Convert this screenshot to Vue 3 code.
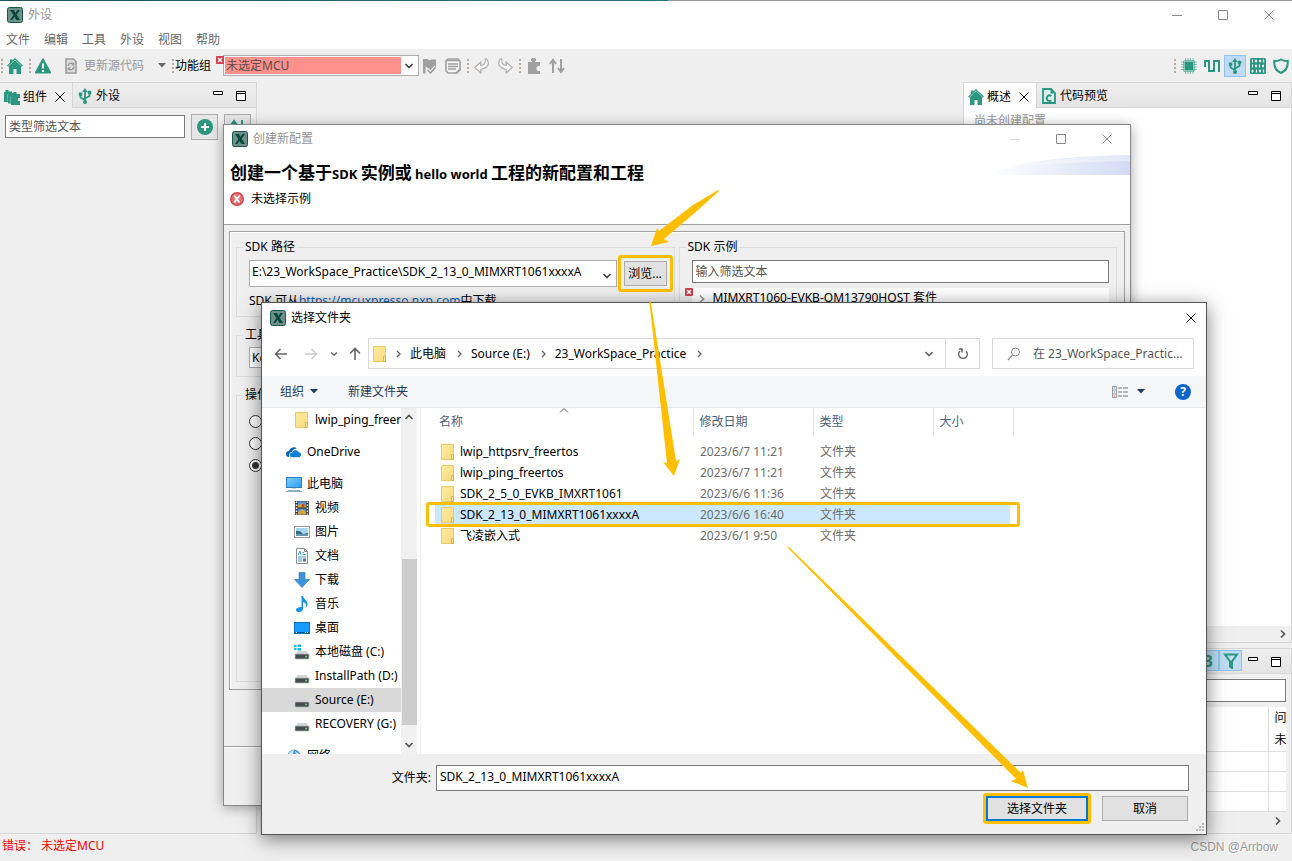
<script setup>
import { ref } from 'vue'

const menus = ['文件', '编辑', '工具', '外设', '视图', '帮助']
const places = [
  { icon: 'folder', label: 'lwip_ping_freertos', deep: true },
  { icon: 'cloud', label: 'OneDrive', gap: true },
  { icon: 'pc', label: '此电脑', gap: true },
  { icon: 'video', label: '视频', deep: true },
  { icon: 'image', label: '图片', deep: true },
  { icon: 'doc', label: '文档', deep: true },
  { icon: 'down', label: '下载', deep: true },
  { icon: 'music', label: '音乐', deep: true },
  { icon: 'desktop', label: '桌面', deep: true },
  { icon: 'cdrive', label: '本地磁盘 (C:)', deep: true },
  { icon: 'drive', label: 'InstallPath (D:)', deep: true },
  { icon: 'drive', label: 'Source (E:)', deep: true, current: true },
  { icon: 'drive', label: 'RECOVERY (G:)', deep: true },
  { icon: 'globe', label: '网络', gap: true }
]
const files = [
  { name: 'lwip_httpsrv_freertos', date: '2023/6/7 11:21' },
  { name: 'lwip_ping_freertos', date: '2023/6/7 11:21' },
  { name: 'SDK_2_5_0_EVKB_IMXRT1061', date: '2023/6/6 11:36' },
  { name: 'SDK_2_13_0_MIMXRT1061xxxxA', date: '2023/6/6 16:40' },
  { name: '飞凌嵌入式', date: '2023/6/1 9:50' }
]
const selected = ref('SDK_2_13_0_MIMXRT1061xxxxA')
const crumbs = ['此电脑', 'Source (E:)', '23_WorkSpace_Practice']
const action = ref(3)
</script>

<template>
  <div class="app">
    <svg class="sprite" aria-hidden="true">
      <defs>
        <linearGradient id="fold" x1="0" y1="0" x2="1" y2="1"><stop offset="0" stop-color="#ffeaa3" /><stop offset="1" stop-color="#fbdb7c" /></linearGradient>
        <linearGradient id="screen" x1="0" y1="0" x2="1" y2="1"><stop offset="0" stop-color="#7fd0fb" /><stop offset="1" stop-color="#2a9df0" /></linearGradient>
      </defs>
      <symbol id="logo" viewBox="0 0 16 16"><rect x=".5" y=".5" width="15" height="15" rx="2" fill="#6f8f89" stroke="#15594e" /><path d="M3 3h4l1.300 3L10.500 3H13L9.700 7.800 13 13H9.200L7.700 9.800 5.300 13H3l3.500-5z" fill="#06483c" /></symbol>
      <symbol id="home" viewBox="0 0 16 16"><path d="M8 0 16 7.500 14.500 9 14 8.500V16H9.500v-5h-3v5H2V8.500L1.500 9 0 7.500 3 5V1.500h2.500v1z" fill="#2b9780" /><path d="m1 8.500 7-6.500 7 6.500" stroke="#a8d8cd" stroke-width=".8" fill="none" /></symbol>
      <symbol id="warn" viewBox="0 0 16 16"><path d="M8 1.500 15 14.500H1z" fill="#2b9780" stroke="#2b9780" stroke-width="2" stroke-linejoin="round" /><path d="M8 5.500v5M8 12v2" stroke="#fff" stroke-width="2" /></symbol>
      <symbol id="update" viewBox="0 0 12 16"><path d="M1 1h7.500L11 3.500V15H1z" fill="#ddd" stroke="#9d9d9d" stroke-width="1.600" /><path d="M3.200 8a3 3 0 0 1 5-2M8.800 8.500a3 3 0 0 1-5 2.500" fill="none" stroke="#999" stroke-width="1.400" /><path d="M9.300 4v3.400H6.200zM2.700 13V9.600h3.100z" fill="#999" /></symbol>
      <symbol id="flag" viewBox="0 0 14 16"><path d="M0 1h4.500q2 1.500 4 .5H13v7.500l-3 3.500-1.500 1.500L5 11.500 4 9H2.500v6.500H0z" fill="#a0a0a0" /><path d="m4.500 10 3 3 4.500-5" stroke="#efefef" stroke-width="1.200" fill="none" /><path d="m4.500 12 3 3 5-5.500" stroke="#a0a0a0" stroke-width="1.600" fill="none" /></symbol>
      <symbol id="note" viewBox="0 0 16 16"><path d="M3 1h10l2 2v9l-3 3H3l-2-2V3z" fill="#f4f4f4" stroke="#a0a0a0" stroke-width="1.600" /><path d="M1 2.500h14M3 6h10M3 8.500h10M3 11h8" stroke="#a0a0a0" stroke-width="1.300" /><path d="m10 15 5-5 1 1-4.500 5z" fill="#a0a0a0" /></symbol>
      <symbol id="undo" viewBox="0 0 16 16"><path d="m.800 9.500 6-5.500v3.500q5-.5 4.500-6.500h1.500q5 7.500-6 10.500v3.500z" fill="#f8f8f8" stroke="#aaa" stroke-width="1.100" /></symbol>
      <symbol id="puzzle" viewBox="0 0 14 16"><path d="M1 4h4V3H4V1l1-1h3l1 1v2H8v1h5v4h-2L9.500 9v2.500L11 13h2v3H1z" fill="#a0a0a0" /></symbol>
      <symbol id="sort" viewBox="0 0 16 16"><path d="M4 15V3M1 6l3-4 3 4M12 1v12M9 10l3 4 3-4" stroke="currentColor" stroke-width="2" fill="none" /></symbol>
      <symbol id="chip" viewBox="0 0 16 16"><path d="M4.500 0v16M7 0v16M9.500 0v16M12 0v16M0 4h16M0 6.500h16M0 9h16M0 11.500h16" stroke="#82c3b5" /><rect x="2.500" y="2.500" width="11" height="11" fill="#2b9780" /><rect x="3.500" y="3.500" width="9" height="9" fill="none" stroke="#aad7cd" stroke-width=".7" /></symbol>
      <symbol id="wave" viewBox="0 0 16 16"><path d="M1 9V3h4v10h5V3h5v11" stroke="#2b9780" stroke-width="2" fill="none" /></symbol>
      <symbol id="usb" viewBox="0 0 16 16"><path d="M8 2v13M8 12 3.500 9.500V6M8 10.500l4.500-2.500V5" stroke="#2b9780" stroke-width="1.800" fill="none" /><path d="M8 0 10.800 4H5.200zM1.800 4.500h3.500v3.200H1.800z" fill="#2b9780" /><circle cx="12.500" cy="4.500" r="1.900" fill="#2b9780" /><circle cx="8" cy="14" r="2" fill="#2b9780" /></symbol>
      <symbol id="bits" viewBox="0 0 16 16"><rect width="16" height="16" rx="1.500" fill="#2b9780" /><path d="M2.500 1.500v3M13.500 1.500v3M2.500 6.500v3M9.500 6.500v3M6.500 11.500v3M13.500 11.500v3" stroke="#fff" stroke-width="1.200" /><path d="M5.500 2h1v2h-1zM9.500 2h1v2h-1zM5.500 7h1v2h-1zM12.500 7h1v2h-1zM2 12h1v2H2zM9.500 12h1v2h-1z" fill="none" stroke="#fff" stroke-width=".9" /></symbol>
      <symbol id="shield" viewBox="0 0 16 16"><path d="M8 1.500Q11 3.500 14.800 3q.5 9-6.800 12Q.7 12 1.200 3 5 3.500 8 1.500z" fill="none" stroke="#2b9780" stroke-width="2" /></symbol>
      <symbol id="parts" viewBox="0 0 16 16"><path d="M0 3h1.500V1h3v1.500H8V4h1.500V3h3v2H16v4h-2v3h2v4H7v-1.500H4V13H0z" fill="#2b9780" /><path d="M3.500 12V5M6.500 14V7.500" stroke="#6dbba9" stroke-width=".7" fill="none" /></symbol>
      <symbol id="close" viewBox="0 0 10 10"><path d="m.5.500 9 9M9.500.500l-9 9" stroke="currentColor" stroke-width="1" fill="none" /></symbol>
      <symbol id="code" viewBox="0 0 14 16"><path d="M1 1h8l4 4v10H1z" fill="#dcefeb" stroke="#2b9780" stroke-width="1.800" /><path d="M8.500 1v4.500H13z" fill="#2b9780" /><path d="M9.300 8.200a2.700 2.700 0 1 0 0 4" stroke="#2b9780" stroke-width="1.900" fill="none" /></symbol>
      <symbol id="plus" viewBox="0 0 16 16"><circle cx="8" cy="8" r="8" fill="#2b9780" /><path d="M8 4v8M4 8h8" stroke="#fff" stroke-width="2" /></symbol>
      <symbol id="min" viewBox="0 0 10 10"><path d="M.5.500h9v3h-9z" fill="#fff" stroke="#000" /></symbol>
      <symbol id="max" viewBox="0 0 10 10"><path d="M.5.500h9v9h-9zM.5 2.500h9" fill="#fff" stroke="#000" /></symbol>
      <symbol id="dash" viewBox="0 0 10 10"><path d="M0 5.500h10" stroke="currentColor" /></symbol>
      <symbol id="square" viewBox="0 0 10 10"><path d="M.5.500h9v9h-9z" stroke="currentColor" fill="none" /></symbol>
      <symbol id="badge" viewBox="0 0 8 8"><rect width="8" height="8" rx="1" fill="#d33c4a" /><path d="m2 2 4 4M6 2 2 6" stroke="#fff" stroke-width="1.400" /></symbol>
      <symbol id="chev" viewBox="0 0 10 10"><path d="m1.500 3 3.500 3.500L8.500 3" stroke="currentColor" stroke-width="1.700" fill="none" /></symbol>
      <symbol id="right" viewBox="0 0 10 10"><path d="M3 1.500 6.500 5 3 8.500" stroke="currentColor" stroke-width="1.700" fill="none" /></symbol>
      <symbol id="crumb" viewBox="0 0 10 10"><path d="M4 2 7 5 4 8" stroke="currentColor" stroke-width="1.400" fill="none" /></symbol>
      <symbol id="arrow" viewBox="0 0 14 14"><path d="M13 7H2M6.500 2 1.500 7l5 5" stroke="currentColor" stroke-width="1.600" fill="none" /></symbol>
      <symbol id="tri" viewBox="0 0 8 5"><path d="M0 0h8L4 4.500z" fill="currentColor" /></symbol>
      <symbol id="error" viewBox="0 0 14 14"><circle cx="7" cy="7" r="7" fill="#ce3f45" /><circle cx="7" cy="7" r="5.700" fill="#e17073" /><path d="m4.300 3.500 5 7M9.800 3.500l-5.600 7" stroke="#fff" stroke-width="1.900" /></symbol>
      <symbol id="folder" viewBox="0 0 16 16"><path d="M1.500.500h12v15h-12z" fill="url(#fold)" stroke="#efc95f" /><path d="M11.500 10.500h2v5h-2z" fill="#ffe69a" stroke="#e0b43c" /></symbol>
      <symbol id="cloud" viewBox="0 0 16 16"><path d="M3 13a3 3 0 0 1 0-6 5 5 0 0 1 8-2.500Q7 4.500 6 8q-3 .5-3 5" fill="#0b63b6" /><path d="M6 13.500a2.600 2.600 0 0 1 0-5.200 3.500 3.500 0 0 1 6.500-.6A3 3 0 0 1 13.500 13.500z" fill="#1280d8" stroke="#fff" stroke-width=".6" /></symbol>
      <symbol id="pc" viewBox="0 0 16 16"><rect x=".5" y="1.500" width="15" height="10" fill="url(#screen)" stroke="#2f7eb9" /><path d="M2 14.500h12M0 15.500h16" stroke="#90afc1" /><path d="M6 12h4v1H6z" fill="#c7d4dd" /></symbol>
      <symbol id="video" viewBox="0 0 16 16"><rect x="1" y="1" width="14" height="14" fill="#444" /><rect x="4" y="1.500" width="8" height="13" fill="#4b91e4" /><path d="M4 5l4-2 4 3v2H4zM4 12l4-3 4 3v2.500H4z" fill="#d6a53c" /><path d="M2.500 1.500v13M13.500 1.500v13" stroke="#fff" stroke-width="1.500" stroke-dasharray="1.500 1.500" /><path d="M4 8h8" stroke="#222" /><circle cx="9" cy="5.500" r="1.400" fill="#c73c2b" /></symbol>
      <symbol id="image" viewBox="0 0 16 16"><rect x=".5" y="2.500" width="15" height="11" fill="#fff" stroke="#9b9b9b" /><path d="M2 4h12v8H2z" fill="#a5d5f5" /><path d="M2 7q4-1 7 3l5-1v3H2z" fill="#386d72" /><path d="M2 10h12v2H2z" fill="#6a93b0" /></symbol>
      <symbol id="doc" viewBox="0 0 16 16"><path d="M2.500.500h8l3 3v12h-11z" fill="#fff" stroke="#8e8e8e" /><path d="M10.500.500v3h3" fill="none" stroke="#8e8e8e" /><path d="m4 7 2-4 1 4M8.500 4.500H10M8.500 6.500H12M4 9h8M4 11h4M4 13h4" stroke="#3b9bd4" fill="none" /><path d="M9 10.500h3v3H9z" fill="#467b91" /></symbol>
      <symbol id="down" viewBox="0 0 16 16"><path d="M5 .500h6v7h4.500L8 15.500.500 7.500H5z" fill="#3d92e0" stroke="#2875b8" stroke-width=".6" /></symbol>
      <symbol id="music" viewBox="0 0 16 16"><path d="M7.500 0h1.500q.5 2.500 3 4.500 3 3.500 0 7.500 1-5-3-6v7q-.5 3-4 3-3 0-3-2.300Q2.500 11 7.500 11z" fill="#1992ee" /></symbol>
      <symbol id="desktop" viewBox="0 0 16 16"><rect x=".5" y="2.500" width="15" height="11" fill="#159bfb" stroke="#0a6fc0" /><path d="M1 12.500h14" stroke="#075a9e" /><path d="M2 12.500h1m8 0h1m1 0h1" stroke="#fff" /></symbol>
      <symbol id="drive" viewBox="0 0 16 16"><path d="M3.500 7h9l2 3.500h-13z" fill="#d4d6d8" /><rect x="1" y="10" width="14" height="5" rx=".8" fill="#464b4e" stroke="#b2b5b7" stroke-width=".8" /><path d="M11 12.500h2" stroke="#46e13c" stroke-width="1.500" /></symbol>
      <symbol id="cdrive" viewBox="0 0 16 16"><use href="#drive" /><path d="M0 1h2.500v2H0zM3.500.500H7V3H3.500zM0 4h2.500v2H0zM3.500 4H7v2.500H3.500z" fill="#10b6ee" /></symbol>
      <symbol id="globe" viewBox="0 0 16 16"><circle cx="8" cy="8" r="6.500" fill="#4a9bc8" /><path d="M3 5q2-3 5-3l-1 4-3 2zM9 3l4 3-2 3z" fill="#c4e7f2" /></symbol>
    </svg>

    <header class="titlebar main-title">
      <svg class="i16"><use href="#logo" /></svg><span>外设</span>
      <div class="winbtns">
        <button aria-label="最小化"><svg class="i10"><use href="#dash" /></svg></button>
        <button aria-label="最大化"><svg class="i10"><use href="#square" /></svg></button>
        <button aria-label="关闭"><svg class="i10"><use href="#close" /></svg></button>
      </div>
    </header>
    <nav class="menu"><button v-for="m in menus" :key="m">{{ m }}</button></nav>

    <div class="toolbar">
      <i class="dots"></i>
      <button class="tb" aria-label="主页"><svg class="i16"><use href="#home" /></svg></button>
      <i class="dots"></i>
      <button class="tb" aria-label="问题"><svg class="i16"><use href="#warn" /></svg></button>
      <button class="tb update"><svg class="i12"><use href="#update" /></svg><span>更新源代码</span><svg class="tri"><use href="#tri" /></svg></button>
      <i class="dots"></i>
      <label class="group" for="fn">功能组</label>
      <div class="combo error">
        <svg class="badge"><use href="#badge" /></svg>
        <select id="fn"><option>未选定MCU</option></select>
        <svg class="i10 caret"><use href="#chev" /></svg>
      </div>
      <div class="tools">
        <button class="tb" aria-label="标记"><svg class="i16"><use href="#flag" /></svg></button>
        <button class="tb" aria-label="备注"><svg class="i16"><use href="#note" /></svg></button>
        <i class="dots"></i>
        <button class="tb" aria-label="撤销"><svg class="i16"><use href="#undo" /></svg></button>
        <button class="tb" aria-label="重做"><svg class="i16 flip"><use href="#undo" /></svg></button>
        <i class="dots"></i>
        <button class="tb" aria-label="组件"><svg class="i16"><use href="#puzzle" /></svg></button>
        <button class="tb grey" aria-label="排序"><svg class="i16"><use href="#sort" /></svg></button>
      </div>
      <div class="perspectives">
        <i class="dots"></i>
        <button class="tb" aria-label="引脚"><svg class="i16"><use href="#chip" /></svg></button>
        <button class="tb" aria-label="时钟"><svg class="i16"><use href="#wave" /></svg></button>
        <button class="tb on" aria-label="外设工具"><svg class="i16"><use href="#usb" /></svg></button>
        <button class="tb" aria-label="设备配置"><svg class="i16"><use href="#bits" /></svg></button>
        <button class="tb" aria-label="安全"><svg class="i16"><use href="#shield" /></svg></button>
      </div>
    </div>

    <main class="workspace">
      <section class="panel left">
        <div class="tabs">
          <div class="tab active"><svg class="i16"><use href="#parts" /></svg><span>组件</span><svg class="i10"><use href="#close" /></svg></div>
          <div class="tab"><svg class="i16"><use href="#usb" /></svg><span>外设</span></div>
          <div class="viewbtns"><button aria-label="最小化"><svg class="i10"><use href="#min" /></svg></button><button aria-label="最大化"><svg class="i10"><use href="#max" /></svg></button></div>
        </div>
        <div class="filter">
          <input aria-label="类型筛选文本" placeholder="类型筛选文本" />
          <button aria-label="添加"><svg class="i16"><use href="#plus" /></svg></button>
          <button class="green" aria-label="排序"><svg class="i16"><use href="#sort" /></svg></button>
        </div>
      </section>
      <div class="right">
        <section class="panel overview">
          <div class="tabs">
            <div class="tab active"><svg class="i16"><use href="#home" /></svg><span>概述</span><svg class="i10"><use href="#close" /></svg></div>
            <div class="tab"><svg class="i16"><use href="#code" /></svg><span>代码预览</span></div>
            <div class="viewbtns"><button aria-label="最小化"><svg class="i10"><use href="#min" /></svg></button><button aria-label="最大化"><svg class="i10"><use href="#max" /></svg></button></div>
          </div>
          <p>尚未创建配置</p>
          <div class="hscroll"><svg class="i10"><use href="#right" /></svg></div>
        </section>
        <section class="panel problems">
          <div class="tabs">
            <div class="toggles"><button>B</button><button aria-label="筛选"><svg class="i16" viewBox="0 0 16 16"><path d="M2 1.500h12L9 8.500V15L7 13.500v-5z" fill="none" stroke="#2b9780" stroke-width="2" /></svg></button></div>
            <div class="viewbtns"><button aria-label="最小化"><svg class="i10"><use href="#min" /></svg></button><button aria-label="最大化"><svg class="i10"><use href="#max" /></svg></button></div>
          </div>
          <input aria-label="筛选问题" />
          <div class="grid">
            <table>
              <tbody>
                <tr><td></td><td>问<br />未</td></tr>
                <tr v-for="n in 3" :key="n"><td></td><td></td></tr>
              </tbody>
            </table>
          </div>
          <div class="hscroll"><svg class="i10"><use href="#right" /></svg></div>
        </section>
      </div>
    </main>

    <footer class="status"><span>错误： 未选定MCU</span><small>CSDN @Arrbow</small></footer>

    <section class="dialog wizard" role="dialog" aria-label="创建新配置">
      <header class="titlebar">
        <svg class="i16"><use href="#logo" /></svg><span>创建新配置</span>
        <div class="winbtns">
          <button class="faint" aria-label="最小化"><svg class="i10"><use href="#dash" /></svg></button>
          <button aria-label="最大化"><svg class="i10"><use href="#square" /></svg></button>
          <button aria-label="关闭"><svg class="i10"><use href="#close" /></svg></button>
        </div>
      </header>
      <div class="banner">
        <h1>创建一个基于<span>SDK </span>实例或<span> hello world </span>工程的新配置和工程</h1>
        <p><svg class="i14"><use href="#error" /></svg>未选择示例</p>
        <svg class="swoosh" viewBox="0 0 141 20" preserveAspectRatio="none">
          <defs><linearGradient id="sw"><stop offset="0" stop-color="#fff" /><stop offset="1" stop-color="#d3dbf4" /></linearGradient></defs>
          <path d="M0 20Q30 2 141 0v20z" fill="url(#sw)" /><path d="M20 12Q70 2 141 0v6Q60 8 20 12z" fill="#fff" opacity=".35" />
        </svg>
      </div>
      <div class="wbody">
        <div class="frame">
          <div class="col">
            <fieldset class="path">
              <legend>SDK 路径</legend>
              <div class="row">
                <div class="combo">
                  <select aria-label="SDK 路径"><option>E:\23_WorkSpace_Practice\SDK_2_13_0_MIMXRT1061xxxxA</option></select>
                  <svg class="i10 caret"><use href="#chev" /></svg>
                </div>
                <button class="push browse">浏览...</button>
              </div>
              <p>SDK 可从<a href="#">https://mcuxpresso.nxp.com</a>中下载</p>
            </fieldset>
            <fieldset class="chain">
              <legend>工具链</legend>
              <div class="combo"><select aria-label="工具链"><option>Keil</option></select></div>
            </fieldset>
            <fieldset class="ops">
              <legend>操作</legend>
              <input v-for="n in 3" :key="n" v-model="action" type="radio" name="op" :value="n" :aria-label="'操作 ' + n" />
            </fieldset>
          </div>
          <fieldset class="samples">
            <legend>SDK 示例</legend>
            <input aria-label="输入筛选文本" placeholder="输入筛选文本" />
            <div class="tree"><svg class="badge"><use href="#badge" /></svg><svg class="i10"><use href="#right" /></svg><span>MIMXRT1060-EVKB-OM13790HOST 套件</span></div>
          </fieldset>
        </div>
      </div>
      <div class="wfoot"></div>
    </section>

    <section class="dialog picker" role="dialog" aria-label="选择文件夹">
      <header class="titlebar">
        <svg class="i16"><use href="#logo" /></svg><span>选择文件夹</span>
        <div class="winbtns"><button aria-label="关闭"><svg class="i10"><use href="#close" /></svg></button></div>
      </header>
      <div class="navbar">
        <button aria-label="后退"><svg class="i14"><use href="#arrow" /></svg></button>
        <button class="off" aria-label="前进"><svg class="i14 flip"><use href="#arrow" /></svg></button>
        <button class="hist" aria-label="最近位置"><svg class="i8"><use href="#chev" /></svg></button>
        <button aria-label="上移"><svg class="i14 up"><use href="#arrow" /></svg></button>
        <div class="address">
          <svg class="i16"><use href="#folder" /></svg><svg class="i10"><use href="#crumb" /></svg>
          <template v-for="c in crumbs" :key="c"><button class="crumb">{{ c }}</button><svg class="i10"><use href="#crumb" /></svg></template>
          <button class="drop" aria-label="展开"><svg class="i10"><use href="#chev" /></svg></button>
          <button class="reload" aria-label="刷新"><svg class="i12" viewBox="0 0 12 12"><path d="M9.200 3.200A4.300 4.300 0 1 1 3 3M2 1h3v3.500" fill="none" stroke="#666" stroke-width="1.500" /></svg></button>
        </div>
        <label class="search">
          <svg class="i14" viewBox="0 0 14 14"><circle cx="8.500" cy="5" r="4" fill="none" stroke="#888" /><path d="M5.500 8 1 13" stroke="#888" stroke-width="1.200" /></svg>
          <input aria-label="搜索" placeholder="在 23_WorkSpace_Practic..." />
        </label>
      </div>
      <div class="cmdbar">
        <button>组织<svg class="tri"><use href="#tri" /></svg></button>
        <button>新建文件夹</button>
        <button class="view" aria-label="更改视图">
          <svg class="i16" viewBox="0 0 16 16"><path d="M.5 2.500h4v11h-4zM.5 6h4M.5 10h4" fill="none" stroke="#999" /><path d="M6 4h4m1 0h5M6 8h4m1 0h5M6 12h4m1 0h5" stroke="#777" /><path d="M2 4h1M2 8h1" stroke="#357ec7" /><path d="M2 12h1" stroke="#c33" /></svg><svg class="tri"><use href="#tri" /></svg>
        </button>
        <button class="help" aria-label="帮助">?</button>
      </div>
      <div class="browser">
        <ul class="places">
          <li v-for="p in places" :key="p.label" :class="{ deep: p.deep, gap: p.gap, current: p.current }"><svg class="i16"><use :href="'#' + p.icon" /></svg><span>{{ p.label }}</span></li>
        </ul>
        <div class="vscroll"><svg class="i10 turn"><use href="#chev" /></svg><i></i><svg class="i10"><use href="#chev" /></svg></div>
        <div class="list">
          <table>
            <colgroup><col class="c-name" /><col class="c-mid" /><col class="c-mid" /><col class="c-size" /></colgroup>
            <thead>
              <tr><th>名称<svg class="i10 asc" viewBox="0 0 10 10"><path d="m1 6.500 4-4 4 4" stroke="#666" fill="none" /></svg></th><th>修改日期</th><th>类型</th><th>大小</th></tr>
            </thead>
            <tbody>
              <tr v-for="f in files" :key="f.name" :class="{ sel: f.name === selected }" @click="selected = f.name">
                <td><svg class="i16"><use href="#folder" /></svg><span>{{ f.name }}</span></td><td>{{ f.date }}</td><td>文件夹</td><td></td>
              </tr>
            </tbody>
          </table>
        </div>
      </div>
      <div class="pfoot">
        <div class="row"><label for="dir">文件夹:</label><input id="dir" v-model="selected" /></div>
        <div class="row actions"><button class="push primary">选择文件夹</button><button class="push">取消</button></div>
        <svg class="grip" viewBox="0 0 9 9"><path d="M7 0h2v2H7zM4 3h2v2H4zM7 3h2v2H7zM1 6h2v2H1zM4 6h2v2H4zM7 6h2v2H7z" fill="#bdbdbd" /></svg>
      </div>
    </section>

    <svg class="arrows" aria-hidden="true" width="1040" height="800">
      <path d="M718 190 693 205 659 231 657 228 651 246 669 242 664 239 697 211 719 191z" />
      <path d="M649 299 667 463 663 462 674 476 680 459 676 461 651 303z" />
      <path d="M787 547 1016 779 1011 781 1028 788 1023 770 1021 773 789 547z" />
    </svg>
  </div>
</template>

<style>
html, body { margin: 0; background: #efefef; }
</style>

<style scoped>
* { box-sizing: border-box; }
.app { position: relative; display: flex; flex-direction: column; min-height: 100vh; overflow: hidden; background: #efefef; color: #000; font: 12px/16px "Noto Sans", "Noto Sans CJK SC", sans-serif; }
.sprite { position: absolute; width: 0; height: 0; }
button, input, select { font: inherit; color: inherit; margin: 0; }
button { display: inline-flex; align-items: center; justify-content: center; padding: 0; border: 0; background: none; white-space: nowrap; }
input, select { min-width: 0; border: 1px solid #7a7a7a; border-radius: 0; background: #fff; padding: 0 3px; outline: 0; }
input::placeholder { color: #555; opacity: 1; }
select { appearance: none; }
svg { flex: none; display: block; }
p, h1, ul { margin: 0; padding: 0; }
.i16 { width: 16px; height: 16px; } .i14 { width: 14px; height: 14px; } .i12 { width: 12px; height: 16px; }
.i10 { width: 10px; height: 10px; } .i8 { width: 8px; height: 8px; } .tri { width: 8px; height: 5px; }
.flip { transform: scaleX(-1); } .up { transform: rotate(90deg); } .turn { transform: rotate(180deg); }

.titlebar { display: flex; align-items: center; height: 29px; padding-left: 8px; gap: 5px; color: #949494; background: #fff; }
.winbtns { margin-left: auto; display: flex; align-self: stretch; color: #8a8a8a; }
.winbtns button { width: 46px; }
.winbtns .faint { color: #ddd; }
.main-title { height: 29px; padding-left: 7px; border-top: 1px solid; border-image: linear-gradient(90deg, #24535f 0, #2c7584 668px, #999 668px) 1; }
.menu { display: flex; gap: 14px; height: 20px; padding: 2px 0 0 6px; background: #fff; color: #666; }

.toolbar { display: flex; align-items: center; height: 33px; }
.dots { width: 2px; height: 14px; margin: 0 1px; flex: none; background: repeating-linear-gradient(#b9ada0 0 2px, transparent 2px 4px); }
.tb { width: 22px; height: 22px; flex: none; }
.toolbar > .tb { margin: 0 2px 0 0; }
.toolbar > .update { width: 101px; margin: 0 5px 0 9px; color: #999; justify-content: flex-start; gap: 7px; }
.update .tri { margin-left: auto; color: #666; }
.group { margin-right: 12px; }
.combo { position: relative; display: flex; background: #fff; border: 1px solid #adadad; padding: 1px; }
.combo select { flex: 1; width: 100%; border: 0; padding: 0 1px; }
.combo .caret { position: absolute; right: 4px; top: 5px; color: #444; }
.error { width: 196px; height: 21px; }
.error select { background: linear-gradient(90deg, #ff918c calc(100% - 16px), #fff calc(100% - 16px)); color: #5a4a4a; line-height: 16px; }
.badge { width: 8px; height: 8px; }
.combo .badge { position: absolute; left: -8px; top: 0; }
.tools { display: flex; align-items: center; gap: 1px; }
.tools .dots { margin-left: 2px; }
.grey { color: #a0a0a0; } .green { color: #2b9780; }
.perspectives { margin-left: auto; display: flex; align-items: center; gap: 1px; }
.on, .toggles button { background: #bfdcf2; border: 1px solid #8fc5f0; }

.workspace { flex: 1; display: flex; justify-content: space-between; min-height: 0; }
.panel { border: 1px solid #d6d6d6; display: flex; flex-direction: column; min-width: 0; }
.left { width: 257px; border-left: 0; }
.right { width: 329px; display: flex; flex-direction: column; gap: 5px; }
.tabs { display: flex; flex: none; height: 25px; background: linear-gradient(#eee, #e4e4e4); }
.tab { display: flex; align-items: center; padding: 2px 7px 0 4px; gap: 3px; border-bottom: 1px solid #d6d6d6; }
.tab .i10 { margin-left: 5px; }
.tab.active { border-bottom: 0; border-right: 1px solid #d6d6d6; background: #efefef; }
.viewbtns { flex: 1; display: flex; justify-content: flex-end; align-items: flex-start; padding: 8px 10px 0 0; gap: 13px; border-bottom: 1px solid #d6d6d6; }
.filter { display: flex; gap: 6px; padding: 6px 5px 0; }
.filter input { flex: 1; height: 23px; margin-top: 1px; }
.filter button { width: 27px; height: 26px; border: 1px solid #adadad; background: #e6e6e6; }
.overview { height: 561px; background: #fff; }
.overview .tab.active { background: #fff; }
.overview p { flex: 1; padding: 5px 10px; color: #999; }
.hscroll { display: flex; flex: none; height: 16px; align-items: center; justify-content: flex-end; padding-right: 3px; background: #efefef; color: #555; }
.problems { flex: 1; }
.toggles { margin-left: auto; display: flex; align-items: flex-start; padding-top: 1px; border-bottom: 1px solid #d6d6d6; }
.toggles button { width: 23px; height: 21px; color: #2b9780; font-size: 16px; font-weight: 700; }
.problems .viewbtns { flex: none; padding-left: 6px; }
.problems > input { height: 23px; margin: 5px; }
.grid { margin: 0 5px; overflow: hidden; background: #fff; }
.grid table { width: 100%; table-layout: fixed; border-collapse: collapse; }
.grid td { height: 20px; padding: 0 6px; border-bottom: 1px solid #ddd; white-space: nowrap; line-height: 22px; overflow: hidden; }
.grid td:last-child { width: 18px; border-left: 1px solid #ddd; }
.problems .hscroll { padding-right: 8px; height: 18px; }
.status { display: flex; justify-content: space-between; height: 27px; padding: 4px 14px 0 2px; color: red; }
.status small { color: #999; font: 12px/18px "Liberation Sans", sans-serif; text-shadow: 1px 1px #fff; }

.dialog { position: absolute; display: flex; flex-direction: column; border: 1px solid #888; background: #efefef; }
.wizard { left: 223px; right: 161px; top: 124px; bottom: 55px; box-shadow: 0 2px 12px rgba(0, 0, 0, .35); }
.wizard .titlebar { height: 28px; }
.banner { position: relative; height: 72px; padding: 10px 6px; background: #fff; border-bottom: 1px solid #a0a0a0; }
.banner h1 { font-size: 17px; line-height: 20px; font-weight: 700; white-space: pre; }
.banner h1 span { font-size: 13px; }
.banner p { display: flex; align-items: center; gap: 7px; margin-top: 7px; }
.swoosh { position: absolute; right: 0; top: 2px; width: 141px; height: 20px; }
.wbody { flex: 1; display: flex; padding: 6px 5px 0; }
.frame { flex: 1; display: grid; grid-template-columns: 1fr 1fr; gap: 4px; padding: 7px 7px 7px 6px; border: 1px solid #a0a0a0; box-shadow: inset 1px 1px #fff; min-width: 0; }
.col { display: flex; flex-direction: column; gap: 10px; min-width: 0; }
fieldset { min-width: 0; margin: 0; padding: 0 12px; border: 1px solid #dcdcdc; }
legend { margin-left: -6px; padding: 0 2px; line-height: 16px; }
.row { display: flex; align-items: center; }
.path { height: 78px; padding-right: 7px; }
.path .row { gap: 7px; margin-top: 5px; }
.path .combo { flex: 1; height: 27px; min-width: 0; }
.path .combo select { padding-bottom: 4px; }
.path .caret { top: 10px; }
.push { height: 25px; border: 1px solid #adadad; background: #e1e1e1; position: relative; }
.browse { width: 43px; }
.browse::after, .primary::after { content: ""; position: absolute; inset: -7px; border: 3px solid #ffbf00; border-radius: 3px; }
.path p { margin-top: 6px; }
a { color: #0a62b8; }
.chain { height: 50px; }
.chain .combo { height: 21px; margin-top: 4px; }
.ops { flex: 1; display: flex; flex-direction: column; }
.ops input { display: block; width: 13px; height: 13px; margin: 12px 0 9px; appearance: none; border: 1px solid #333; border-radius: 50%; padding: 0; }
.ops input + input { margin-top: 0; }
.ops input:checked { background: radial-gradient(circle, #333 0 3px, #fff 4px); }
.samples { padding-right: 7px; }
.samples input { display: block; width: 100%; height: 23px; margin-top: 5px; }
.tree { display: flex; position: relative; height: 100px; align-items: flex-start; margin-top: 5px; padding: 2px 5px; gap: 6px; background: #fff; }
.tree .badge { position: absolute; left: -7px; top: 0; }
.tree .i10 { margin-top: 4px; color: #999; }
.wfoot { height: 59px; margin-top: 56px; border-top: 1px solid #a0a0a0; box-shadow: inset 0 1px #fff; }

.picker { left: 261px; right: 85px; top: 302px; bottom: 26px; border-color: #555; box-shadow: 0 4px 18px rgba(0, 0, 0, .5); }
.picker .titlebar { color: #000; }
.picker .winbtns { color: #000; }
.picker .winbtns button { width: 30px; }
.navbar { display: flex; align-items: center; height: 44px; padding: 0 12px; background: #fff; color: #666; }
.navbar > button { width: 30px; flex: none; justify-content: flex-start; }
.navbar > .hist { width: 18px; }
.navbar > .hist + button { width: 26px; }
.navbar > .off { width: 24px; color: #ccc; }
.hist { margin-left: 2px; }
.address { flex: 1; display: flex; align-items: center; height: 31px; margin: 0 0 1px -6px; padding-left: 3px; border: 1px solid #d9d9d9; color: #666; gap: 5px; }
.crumb { color: #000; margin: 0 3px 0 2px; }
.drop { margin-left: auto; width: 22px; }
.reload { align-self: stretch; width: 34px; border-left: 1px solid #d9d9d9; }
.search { display: flex; align-items: center; width: 202px; height: 31px; margin: 0 0 1px 12px; padding-left: 14px; gap: 9px; border: 1px solid #d9d9d9; }
.search input { flex: 1; border: 0; }
.cmdbar { display: flex; align-items: center; height: 32px; padding: 0 15px 0 18px; gap: 30px; background: #f5f6f7; border-bottom: 1px solid #e5e6e8; color: #1e395b; }
.cmdbar button { gap: 6px; }
.cmdbar .view { margin-left: auto; gap: 9px; }
.cmdbar .help { width: 16px; height: 16px; border-radius: 50%; background: #0a66c8; color: #fff; font-weight: 700; }
.browser { flex: 1; display: flex; min-height: 0; background: #fff; }
.places { width: 139px; height: 346px; overflow: hidden; list-style: none; }
.places li { display: flex; align-items: center; gap: 5px; height: 24px; padding-left: 24px; white-space: nowrap; overflow: hidden; }
.places .deep { padding-left: 32px; }
.places .gap { margin-top: 8px; }
.places .current { background: #d9d9d9; }
.vscroll { display: flex; flex-direction: column; justify-content: flex-end; align-items: center; width: 16px; padding: 4px 0; gap: 15px; background: #f0f0f0; color: #555; }
.vscroll .turn { margin-bottom: auto; }
.vscroll i { width: 15px; height: 166px; background: #cdcdcd; }
.list { flex: 1; margin-left: 3px; padding-left: 14px; border-left: 1px solid #eee; }
.list table { width: 578px; table-layout: fixed; border-collapse: collapse; }
.c-name { width: 258px; } .c-mid { width: 120px; } .c-size { width: 80px; }
th { position: relative; height: 28px; padding: 0 5px 0 6px; border-right: 1px solid #e5e5e5; text-align: left; font-weight: 400; color: #4c607a; }
th:first-child { padding-left: 4px; }
.asc { position: absolute; left: 124px; top: -2px; }
.list tbody::before { content: ""; display: block; height: 5px; }
.list tbody td { height: 21px; padding: 0 7px; color: #6d6d6d; line-height: 16px; }
.list tbody td:first-child { display: flex; align-items: center; gap: 4px; padding-left: 5px; color: #000; }
.list tbody tr { position: relative; }
.sel { background: linear-gradient(90deg, #cce8ff 575px, #fff 575px); }
.sel::after { content: ""; position: absolute; inset: -2px -7px -2px -9px; border: 3px solid #ffbf00; border-radius: 3px; }
.pfoot { position: relative; height: 80px; padding: 11px 17px; background: #efefef; }
.pfoot label { width: 157px; padding-right: 5px; text-align: right; }
.pfoot .row input { flex: 1; height: 26px; padding-bottom: 3px; }
.actions { justify-content: flex-end; gap: 14px; margin: 5px 1px 0; }
.actions .push { width: 86px; height: 25px; }
.actions .primary { width: 102px; border: 2px solid #0078d7; }
.primary::after { inset: -5px; }
.grip { position: absolute; right: 2px; bottom: 2px; width: 9px; height: 9px; }
.arrows { position: absolute; left: 0; top: 0; fill: #ffbf00; pointer-events: none; }
</style>
